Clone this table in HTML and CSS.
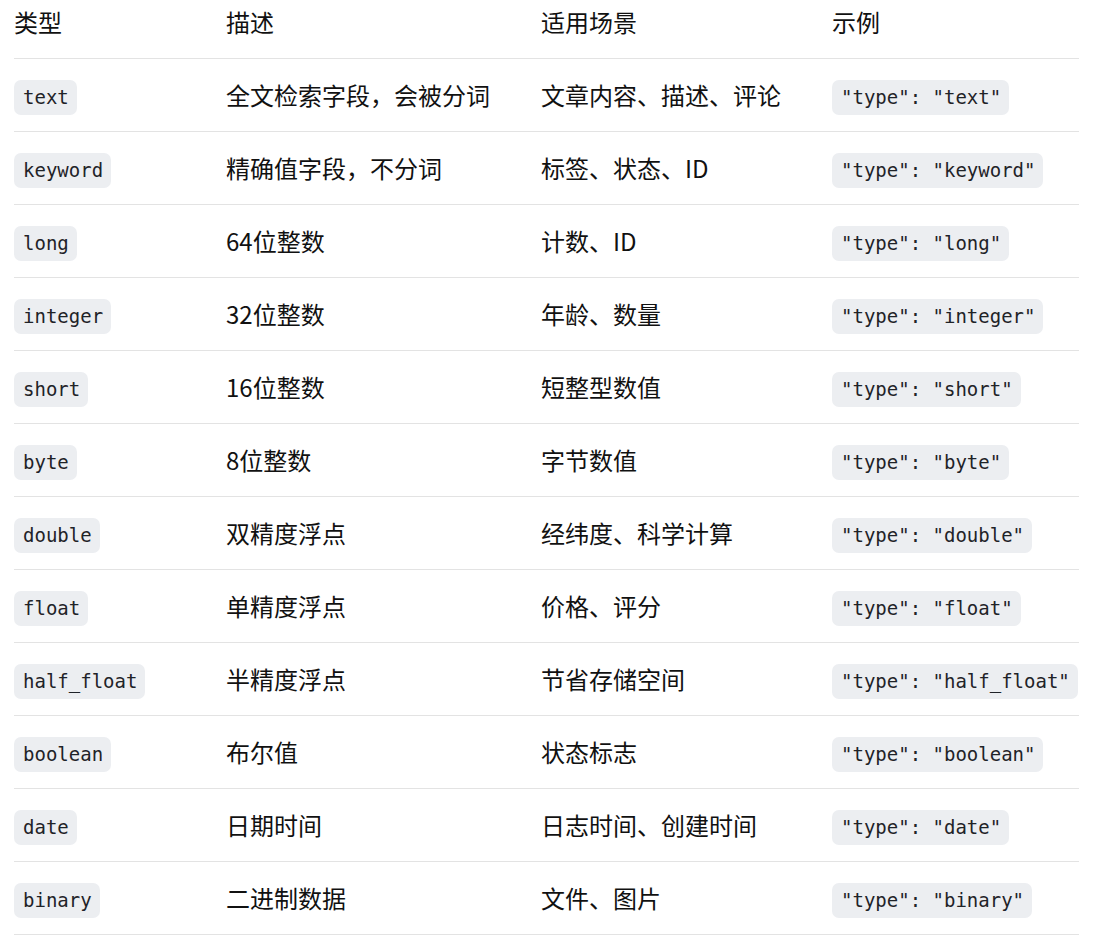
FILE: index.html
```html
<!DOCTYPE html>
<html lang="zh-CN">
<head>
<meta charset="utf-8">
<link rel="stylesheet" href="styles.css">
</head>
<body>
<div class="wrap">
<table class="types">
<colgroup><col class="c1"><col class="c2"><col class="c3"><col class="c4"></colgroup>
<thead>
<tr><th>类型</th><th>描述</th><th>适用场景</th><th>示例</th></tr>
</thead>
<tbody>
<tr><td><code>text</code></td><td>全文检索字段，会被分词</td><td>文章内容、描述、评论</td><td><code>"type": "text"</code></td></tr>
<tr><td><code>keyword</code></td><td>精确值字段，不分词</td><td>标签、状态、ID</td><td><code>"type": "keyword"</code></td></tr>
<tr><td><code>long</code></td><td>64位整数</td><td>计数、ID</td><td><code>"type": "long"</code></td></tr>
<tr><td><code>integer</code></td><td>32位整数</td><td>年龄、数量</td><td><code>"type": "integer"</code></td></tr>
<tr><td><code>short</code></td><td>16位整数</td><td>短整型数值</td><td><code>"type": "short"</code></td></tr>
<tr><td><code>byte</code></td><td>8位整数</td><td>字节数值</td><td><code>"type": "byte"</code></td></tr>
<tr><td><code>double</code></td><td>双精度浮点</td><td>经纬度、科学计算</td><td><code>"type": "double"</code></td></tr>
<tr><td><code>float</code></td><td>单精度浮点</td><td>价格、评分</td><td><code>"type": "float"</code></td></tr>
<tr><td><code>half_float</code></td><td>半精度浮点</td><td>节省存储空间</td><td><code>"type": "half_float"</code></td></tr>
<tr><td><code>boolean</code></td><td>布尔值</td><td>状态标志</td><td><code>"type": "boolean"</code></td></tr>
<tr><td><code>date</code></td><td>日期时间</td><td>日志时间、创建时间</td><td><code>"type": "date"</code></td></tr>
<tr><td><code>binary</code></td><td>二进制数据</td><td>文件、图片</td><td><code>"type": "binary"</code></td></tr>
</tbody>
</table>
</div>
</body>
</html>
```
FILE: styles.css
```css
html, body {
  margin: 0;
  padding: 0;
  background: #ffffff;
}
body {
  font-family: "Noto Sans CJK SC", "Noto Sans", sans-serif;
  color: #111111;
}
.wrap {
  padding-left: 14px;
}
.types {
  border-collapse: collapse;
  width: 1065px;
  table-layout: fixed;
}
.c1 { width: 212px; }
.c2 { width: 315px; }
.c3 { width: 291px; }
.c4 { width: 247px; }
.types th {
  text-align: left;
  font-weight: 400;
  font-size: 24px;
  line-height: 36px;
  padding: 4px 0 18px 0;
  border-bottom: 1px solid #e3e3e3;
}
.types td {
  font-size: 24px;
  line-height: 36px;
  height: 72px;
  padding: 0;
  vertical-align: middle;
  border-bottom: 1px solid #e3e3e3;
  white-space: nowrap;
}
.types code {
  display: inline-block;
  font-family: "DejaVu Sans Mono", "Liberation Mono", monospace;
  font-size: 19px;
  line-height: 35px;
  padding: 0 8px 0 9px;
  background: #eceef1;
  border-radius: 7px;
  color: #1f2328;
}
```
